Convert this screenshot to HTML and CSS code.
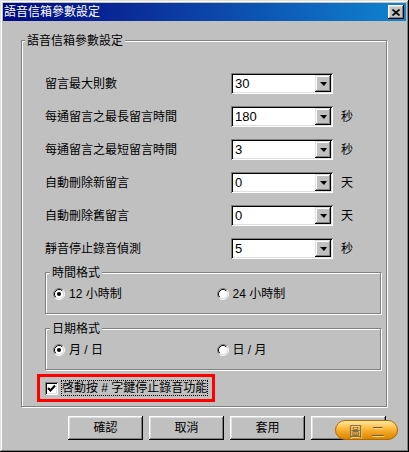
FILE: index.html
```html
<!DOCTYPE html>
<html lang="zh-Hant">
<head>
<meta charset="utf-8">
<title>語音信箱參數設定</title>
<link rel="stylesheet" href="styles.css">
</head>
<body>
<div class="window">
  <div class="titlebar">
    <span class="title">語音信箱參數設定</span>
    <span class="close"><svg width="8" height="7" viewBox="0 0 8 7"><path d="M0.5 0.5 L7.5 6.5 M7.5 0.5 L0.5 6.5" stroke="#000" stroke-width="1.6" fill="none"/></svg></span>
  </div>

  <div class="group main-group">
    <div class="group-title main-title">語音信箱參數設定</div>
    <div class="rows">
      <span class="label">留言最大則數</span>
      <span class="combo"><span class="val">30</span><span class="drop"><i class="tri"></i></span></span>
      <span class="unit"></span>

      <span class="label">每通留言之最長留言時間</span>
      <span class="combo"><span class="val">180</span><span class="drop"><i class="tri"></i></span></span>
      <span class="unit">秒</span>

      <span class="label">每通留言之最短留言時間</span>
      <span class="combo"><span class="val">3</span><span class="drop"><i class="tri"></i></span></span>
      <span class="unit">秒</span>

      <span class="label">自動刪除新留言</span>
      <span class="combo"><span class="val">0</span><span class="drop"><i class="tri"></i></span></span>
      <span class="unit">天</span>

      <span class="label">自動刪除舊留言</span>
      <span class="combo"><span class="val">0</span><span class="drop"><i class="tri"></i></span></span>
      <span class="unit">天</span>

      <span class="label">靜音停止錄音偵測</span>
      <span class="combo"><span class="val">5</span><span class="drop"><i class="tri"></i></span></span>
      <span class="unit">秒</span>
    </div>

    <div class="group sub-group first-sub">
      <div class="group-title sub-title">時間格式</div>
      <div class="radio-row">
        <span class="option"><svg class="radio" width="12" height="12" viewBox="0 0 12 12"><circle cx="6" cy="6" r="4.5" fill="#fff"/><path d="M2.11 9.89 A5.5 5.5 0 0 1 9.89 2.11" stroke="#808080" fill="none"/><path d="M9.89 2.11 A5.5 5.5 0 0 1 2.11 9.89" stroke="#fff" fill="none"/><path d="M2.82 9.18 A4.5 4.5 0 0 1 9.18 2.82" stroke="#000" fill="none"/><path d="M9.18 2.82 A4.5 4.5 0 0 1 2.82 9.18" stroke="#dfdfdf" fill="none"/><circle cx="6" cy="6" r="2" fill="#000"/></svg>12 小時制</span>
        <span class="option"><svg class="radio" width="12" height="12" viewBox="0 0 12 12"><circle cx="6" cy="6" r="4.5" fill="#fff"/><path d="M2.11 9.89 A5.5 5.5 0 0 1 9.89 2.11" stroke="#808080" fill="none"/><path d="M9.89 2.11 A5.5 5.5 0 0 1 2.11 9.89" stroke="#fff" fill="none"/><path d="M2.82 9.18 A4.5 4.5 0 0 1 9.18 2.82" stroke="#000" fill="none"/><path d="M9.18 2.82 A4.5 4.5 0 0 1 2.82 9.18" stroke="#dfdfdf" fill="none"/></svg>24 小時制</span>
      </div>
    </div>

    <div class="group sub-group">
      <div class="group-title sub-title">日期格式</div>
      <div class="radio-row">
        <span class="option"><svg class="radio" width="12" height="12" viewBox="0 0 12 12"><circle cx="6" cy="6" r="4.5" fill="#fff"/><path d="M2.11 9.89 A5.5 5.5 0 0 1 9.89 2.11" stroke="#808080" fill="none"/><path d="M9.89 2.11 A5.5 5.5 0 0 1 2.11 9.89" stroke="#fff" fill="none"/><path d="M2.82 9.18 A4.5 4.5 0 0 1 9.18 2.82" stroke="#000" fill="none"/><path d="M9.18 2.82 A4.5 4.5 0 0 1 2.82 9.18" stroke="#dfdfdf" fill="none"/><circle cx="6" cy="6" r="2" fill="#000"/></svg>月 / 日</span>
        <span class="option"><svg class="radio" width="12" height="12" viewBox="0 0 12 12"><circle cx="6" cy="6" r="4.5" fill="#fff"/><path d="M2.11 9.89 A5.5 5.5 0 0 1 9.89 2.11" stroke="#808080" fill="none"/><path d="M9.89 2.11 A5.5 5.5 0 0 1 2.11 9.89" stroke="#fff" fill="none"/><path d="M2.82 9.18 A4.5 4.5 0 0 1 9.18 2.82" stroke="#000" fill="none"/><path d="M9.18 2.82 A4.5 4.5 0 0 1 2.82 9.18" stroke="#dfdfdf" fill="none"/></svg>日 / 月</span>
      </div>
    </div>

    <div class="highlight">
      <span class="checkbox"><svg width="9" height="9" viewBox="0 0 9 9"><path d="M1 4 L3.5 6.5 L8 1.5" stroke="#000" stroke-width="2" fill="none"/></svg></span>
      <span class="check-label">啓動按 # 字鍵停止錄音功能</span>
    </div>
  </div>

  <div class="buttons">
    <span class="btn">確認</span>
    <span class="btn">取消</span>
    <span class="btn">套用</span>
    <span class="btn"></span>
  </div>

  <span class="badge">圖二</span>
</div>
</body>
</html>
```

FILE: styles.css
```css
html, body {
  margin: 0;
  padding: 0;
  background: #c0c0c0;
}

body {
  font-family: "Liberation Sans", "Noto Sans CJK TC", sans-serif;
  font-size: 12px;
  color: #000;
}

.window {
  position: relative;
  width: 409px;
  height: 452px;
  box-sizing: border-box;
  padding: 3px;
  background: #c0c0c0;
  box-shadow: inset -1px -1px 0 #000, inset 1px 1px 0 #dfdfdf,
              inset -2px -2px 0 #808080, inset 2px 2px 0 #fff;
}

.titlebar {
  height: 18px;
  display: flex;
  align-items: center;
  justify-content: space-between;
  padding: 0 2px 0 1px;
  background: linear-gradient(90deg, #000a80 0%, #0a2a98 30%, #1084d0 100%);
}

.title {
  color: #fff;
  font-size: 12px;
  line-height: 14px;
}

.close {
  width: 16px;
  height: 14px;
  box-sizing: border-box;
  display: flex;
  align-items: center;
  justify-content: center;
  background: #c0c0c0;
  box-shadow: inset -1px -1px 0 #000, inset 1px 1px 0 #fff,
              inset -2px -2px 0 #808080, inset 2px 2px 0 #dfdfdf;
}

.group {
  border: 1px solid #808080;
  box-shadow: inset 1px 1px 0 #fff, 1px 1px 0 #fff;
  box-sizing: border-box;
}

.group-title {
  width: fit-content;
  margin-top: -7px;
  padding: 0 2px;
  line-height: 14px;
  background: #c0c0c0;
}

.main-title {
  margin-left: -20px;
}

.sub-title {
  margin-left: -3px;
}

.main-group {
  width: 366px;
  margin: 19px 0 0 18px;
  padding: 0 0 4px 23px;
}

.rows {
  margin-top: 25px;
  display: grid;
  grid-template-columns: 178px 102px auto;
  grid-auto-rows: 21px;
  column-gap: 8px;
  row-gap: 12px;
  align-items: center;
}

.label, .unit {
  line-height: 14px;
}

.combo {
  height: 21px;
  box-sizing: border-box;
  display: flex;
  align-items: center;
  justify-content: space-between;
  padding: 2px;
  background: #fff;
  box-shadow: inset 1px 1px 0 #808080, inset -1px -1px 0 #fff,
              inset 2px 2px 0 #000, inset -2px -2px 0 #dfdfdf;
}

.val {
  padding-left: 2px;
  line-height: 14px;
  font-size: 13px;
}

.drop {
  width: 16px;
  height: 17px;
  box-sizing: border-box;
  display: flex;
  align-items: center;
  justify-content: center;
  background: #c0c0c0;
  box-shadow: inset -1px -1px 0 #000, inset 1px 1px 0 #dfdfdf,
              inset -2px -2px 0 #808080, inset 2px 2px 0 #fff;
}

.tri {
  width: 0;
  height: 0;
  border-left: 4px solid transparent;
  border-right: 3px solid transparent;
  border-top: 4px solid #000;
  margin-top: 1px;
}

.sub-group {
  width: 336px;
  padding: 0 0 11px 7px;
  margin-top: 14px;
}

.first-sub {
  margin-top: 13px;
}

.radio-row {
  margin-top: 6px;
  display: flex;
  align-items: center;
  height: 16px;
}

.option {
  display: flex;
  align-items: center;
  gap: 4px;
  width: 164px;
  line-height: 14px;
}

.radio {
  display: block;
  flex: none;
}

.highlight {
  margin: 4px 0 0 -8px;
  width: 178px;
  height: 28px;
  box-sizing: border-box;
  border: 3px solid #ff0000;
  padding-left: 5px;
  display: flex;
  align-items: center;
  gap: 4px;
}

.checkbox {
  width: 13px;
  height: 13px;
  box-sizing: border-box;
  display: flex;
  align-items: center;
  justify-content: center;
  background: #fff;
  box-shadow: inset 1px 1px 0 #808080, inset -1px -1px 0 #fff,
              inset 2px 2px 0 #000, inset -2px -2px 0 #dfdfdf;
}

.check-label {
  line-height: 14px;
  outline: 1px dotted #000;
  outline-offset: 0;
  white-space: nowrap;
}

.buttons {
  display: flex;
  gap: 6px;
  margin: 9px 0 0 65px;
}

.btn {
  width: 75px;
  height: 24px;
  box-sizing: border-box;
  display: flex;
  align-items: center;
  justify-content: center;
  line-height: 14px;
  background: #c0c0c0;
  box-shadow: inset -1px -1px 0 #000, inset 1px 1px 0 #fff,
              inset -2px -2px 0 #808080, inset 2px 2px 0 #dfdfdf;
}

.badge {
  position: absolute;
  left: 335px;
  top: 420px;
  width: 63px;
  height: 20px;
  box-sizing: border-box;
  border: 1px solid #b06a00;
  border-radius: 10px;
  background: linear-gradient(180deg, #ffe7a8 0%, #ffc24a 35%, #f0a020 65%, #d98600 100%);
  display: flex;
  align-items: center;
  justify-content: center;
  font-size: 13px;
  letter-spacing: 9px;
  padding-left: 9px;
  color: #6a5a3c;
  text-shadow: 1px 1px 0 #ffd98a;
}
```
